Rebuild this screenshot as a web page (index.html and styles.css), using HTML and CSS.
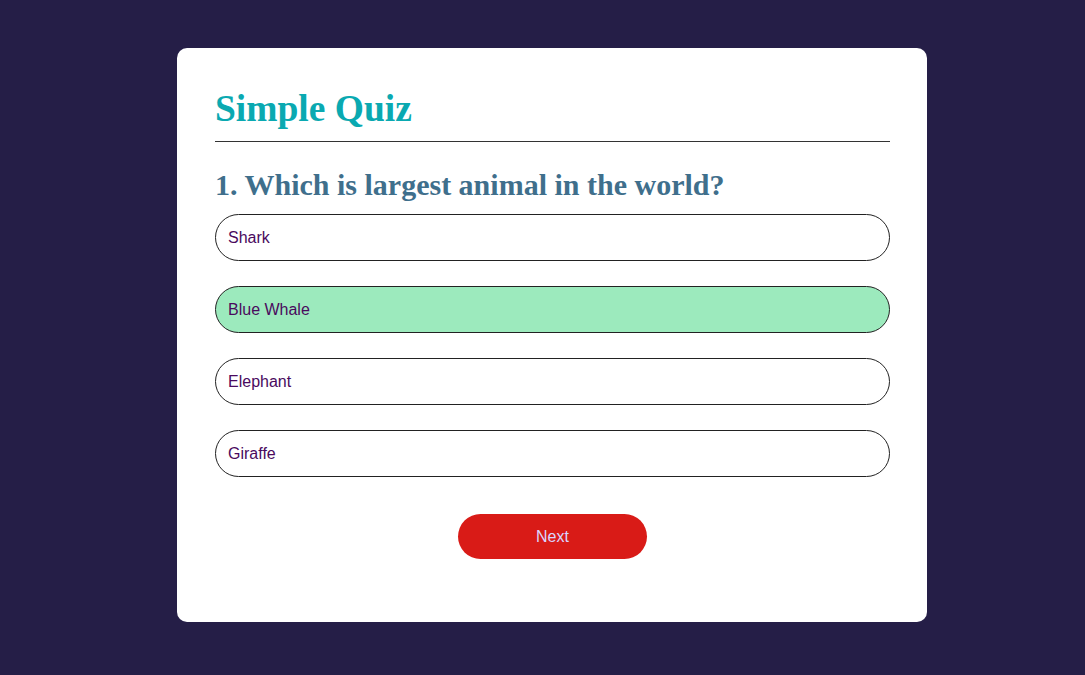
FILE: index.html
```html
<!DOCTYPE html>
<html>
<head>
<meta charset="utf-8">
<link rel="stylesheet" href="styles.css">
</head>
<body>
<div class="app">
  <h1 class="title">Simple Quiz</h1>
  <div class="quiz">
    <h2 class="question">1. Which is largest animal in the world?</h2>
    <div class="answers">
      <button class="btn">Shark</button>
      <button class="btn correct">Blue Whale</button>
      <button class="btn">Elephant</button>
      <button class="btn">Giraffe</button>
    </div>
    <button class="next">Next</button>
  </div>
</div>
</body>
</html>
```
FILE: styles.css
```css
* { margin: 0; padding: 0; box-sizing: border-box; }
body {
  background: #251e47;
  font-family: "Liberation Sans", Arial, sans-serif;
  padding-left: 19px;
}
.app {
  background: #fff;
  width: 750px;
  margin: 48px auto 0;
  border-radius: 10px;
  padding: 38px 37px 63px 38px;
}
.title {
  font-family: "Liberation Serif", "Times New Roman", serif;
  font-size: 37.5px;
  line-height: 46px;
  color: #0aa9b1;
  font-weight: bold;
  padding-bottom: 9px;
  border-bottom: 1px solid #333;
}
.question {
  font-family: "Liberation Serif", "Times New Roman", serif;
  font-size: 30px;
  line-height: 34px;
  color: #3f6f8c;
  font-weight: bold;
  margin-top: 26px;
}
.answers {
  display: flex;
  flex-direction: column;
  gap: 25px;
  margin-top: 12px;
}
.btn {
  display: block;
  width: 100%;
  height: 47px;
  background: #fff;
  color: #4a0a5e;
  font-family: "Liberation Sans", Arial, sans-serif;
  font-size: 16px;
  text-align: left;
  padding: 0 12px;
  border: 1px solid #222;
  border-radius: 24px;
}
.btn.correct { background: #9ceabd; }
.next {
  display: block;
  width: 189px;
  height: 45px;
  margin: 37px auto 0;
  background: #d91b17;
  color: #d9d6ff;
  border: 0;
  border-radius: 23px;
  font-family: "Liberation Sans", Arial, sans-serif;
  font-size: 16px;
}
```
